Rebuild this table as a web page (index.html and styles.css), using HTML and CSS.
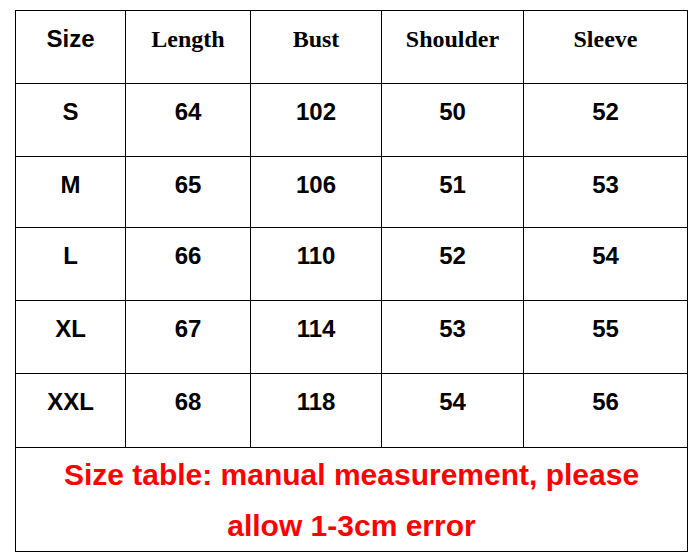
FILE: index.html
```html
<!DOCTYPE html>
<html lang="en">
<head>
<meta charset="utf-8">
<title>Size table</title>
<link rel="stylesheet" href="styles.css">
</head>
<body>
<div class="chart">
  <div class="cell head sans">Size</div>
  <div class="cell head">Length</div>
  <div class="cell head">Bust</div>
  <div class="cell head">Shoulder</div>
  <div class="cell head">Sleeve</div>

  <div class="cell">S</div><div class="cell">64</div><div class="cell">102</div><div class="cell">50</div><div class="cell">52</div>
  <div class="cell">M</div><div class="cell">65</div><div class="cell">106</div><div class="cell">51</div><div class="cell">53</div>
  <div class="cell">L</div><div class="cell">66</div><div class="cell">110</div><div class="cell">52</div><div class="cell">54</div>
  <div class="cell">XL</div><div class="cell">67</div><div class="cell">114</div><div class="cell">53</div><div class="cell">55</div>
  <div class="cell">XXL</div><div class="cell">68</div><div class="cell">118</div><div class="cell">54</div><div class="cell">56</div>

  <div class="note">Size table: manual measurement, please<br>allow 1-3cm error</div>
</div>
</body>
</html>
```
FILE: styles.css
```css
html, body {
  margin: 0;
  padding: 0;
  background: #ffffff;
}

body {
  padding: 10px 0 0 15px;
}

.chart {
  display: grid;
  width: max-content;
  grid-template-columns: 109px 124px 130px 141px 163px;
  grid-template-rows: 72px 72px 70px 72px 72px 73px 103px;
  gap: 1px;
  padding: 1px;
  background: #000000;
}

.cell {
  background: #ffffff;
  text-align: center;
  padding-top: 14px;
  font-family: "Liberation Sans", Arial, sans-serif;
  font-weight: bold;
  font-size: 24px;
  line-height: 28px;
  color: #000000;
}

.cell.head {
  font-family: "Liberation Serif", "Times New Roman", serif;
}

.cell.head.sans {
  font-family: "Liberation Sans", Arial, sans-serif;
}

.note {
  grid-column: 1 / -1;
  background: #ffffff;
  display: flex;
  align-items: center;
  justify-content: center;
  text-align: center;
  font-family: "Liberation Sans", Arial, sans-serif;
  font-weight: bold;
  font-size: 30px;
  line-height: 51px;
  color: #ff0000;
}
```
